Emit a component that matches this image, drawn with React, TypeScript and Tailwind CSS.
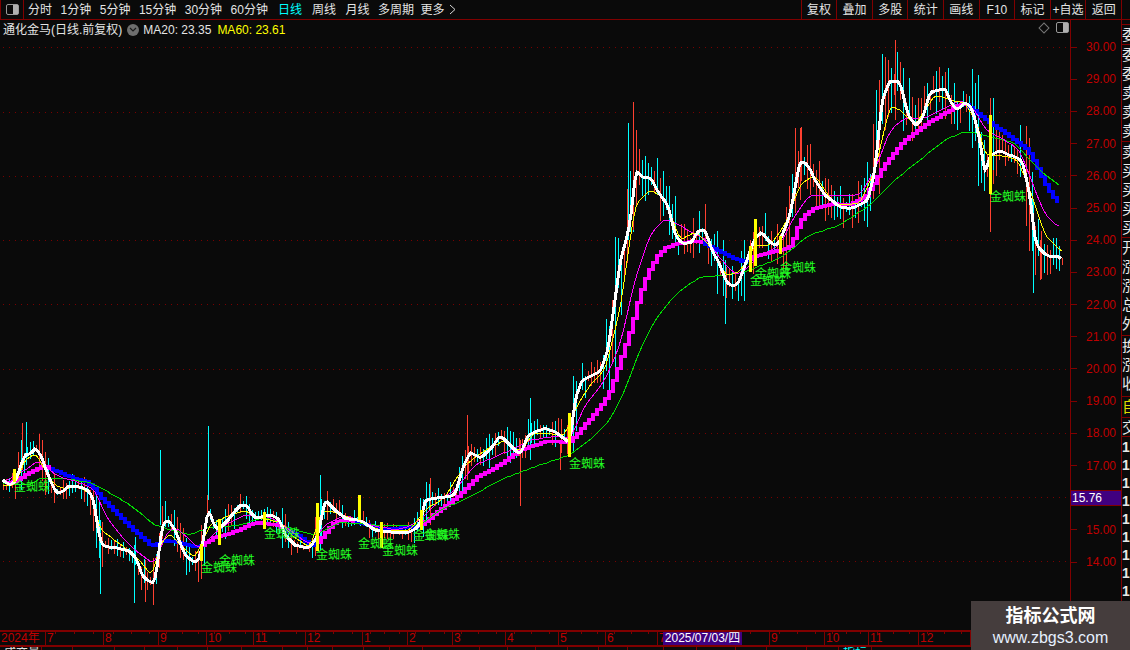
const font = { fontFamily: '"Liberation Sans", "Noto Sans CJK SC", sans-serif' };

type Pt = [number, number];

const whitePts: Pt[] = [[3,480],[8,484],[14,484],[20,468],[26,452],[30,455],[36,447],[42,458],[48,475],[55,491],[62,493],[68,486],[78,486],[88,490],[94,500],[98,530],[102,546],[115,547],[130,551],[137,560],[142,576],[150,582],[155,582],[158,560],[162,525],[168,519],[175,530],[185,555],[195,563],[200,558],[205,530],[208,507],[214,525],[218,530],[228,520],[240,505],[247,505],[252,515],[258,518],[270,514],[280,520],[285,535],[295,545],[310,548],[318,535],[325,500],[335,510],[345,518],[360,520],[375,530],[395,532],[410,532],[420,525],[425,500],[435,498],[455,495],[462,470],[470,452],[480,458],[490,450],[500,435],[510,445],[520,455],[528,435],[545,428],[555,432],[570,443],[575,400],[582,380],[600,372],[608,350],[615,300],[620,262],[630,225],[636,168],[642,178],[650,177],[660,195],[668,205],[675,235],[682,243],[692,242],[698,230],[705,230],[712,250],[720,265],[728,285],[738,285],[745,265],[755,238],[762,232],[770,243],[778,245],[790,215],[800,160],[808,165],[815,180],[825,195],[840,207],[852,208],[868,200],[875,170],[882,100],[890,80],[900,82],[908,115],[915,125],[922,120],[930,92],[938,90],[945,88],[952,105],[958,110],[965,102],[972,108],[980,140],[985,175],[990,155],[1000,150],[1012,156],[1022,160],[1030,195],[1035,240],[1040,250],[1050,257],[1058,255],[1062,262]];
const yellowPts: Pt[] = [[3,485],[15,485],[25,460],[36,453],[50,480],[60,488],[80,487],[92,495],[100,530],[108,535],[125,548],[140,560],[152,577],[160,545],[170,533],[180,545],[195,558],[210,525],[225,517],[245,510],[255,517],[280,522],[295,538],[310,548],[322,510],[335,512],[355,520],[380,530],[410,530],[425,510],[445,497],[465,465],[485,450],[505,440],[520,452],[535,432],[565,435],[575,410],[590,385],[605,370],[620,310],[635,205],[650,190],[665,198],[680,240],[695,232],[710,245],[725,275],[740,272],[755,245],[770,245],[785,225],[800,185],[815,175],[835,205],[860,203],[875,170],[890,105],[900,110],[915,125],[935,95],[950,100],[965,103],[978,125],[985,155],[1000,155],[1018,160],[1030,190],[1045,235],[1062,252]];
const magentaPts: Pt[] = [[3,482],[25,470],[40,460],[55,475],[80,483],[95,490],[105,515],[120,535],[135,550],[150,562],[155,563],[165,535],[175,527],[190,540],[200,550],[212,535],[225,525],[245,515],[270,517],[290,530],[310,545],[325,525],[345,515],[370,525],[400,530],[420,520],[440,500],[455,490],[475,465],[500,455],[530,440],[560,435],[570,440],[585,405],[605,380],[620,345],[635,280],[650,235],[665,218],[680,225],[695,235],[705,238],[720,258],[735,275],[745,270],[760,255],[780,245],[795,215],[810,195],[835,195],[860,195],[875,170],[890,130],[905,118],[925,118],[945,108],[960,100],[975,110],[985,130],[1000,137],[1020,150],[1035,190],[1045,215],[1060,228]];
const thickPts: Pt[] = [[3,482],[15,482],[30,472],[45,465],[60,472],[75,478],[90,482],[105,500],[120,515],[135,530],[155,547],[160,540],[175,541],[200,547],[215,537],[240,530],[255,522],[280,525],[300,535],[316,548],[320,540],[335,522],[350,519],[380,528],[420,527],[440,510],[460,495],[480,475],[500,465],[520,450],[550,440],[570,443],[590,420],[610,395],[625,350],[633,327],[640,297],[650,270],[660,253],[667,247],[675,244],[700,240],[725,253],[745,262],[757,255],[793,247],[800,222],[813,208],[836,203],[850,205],[868,195],[885,165],[905,140],[925,125],[950,110],[965,102],[985,118],[1010,135],[1030,150],[1050,190],[1062,207]];
const greenPts: Pt[] = [[3,483],[30,485],[40,478],[60,478],[90,482],[105,490],[130,505],[155,525],[165,528],[190,535],[210,527],[240,525],[265,517],[290,528],[315,535],[340,522],[380,525],[420,525],[440,510],[470,497],[500,480],[540,465],[570,455],[590,440],[610,420],[625,390],[640,350],[655,320],[675,295],[700,277],[720,275],[745,272],[780,258],[810,235],[840,225],[870,205],[895,180],[920,160],[945,140],[965,131],[985,135],[1015,143],[1030,160],[1045,175],[1060,186]];

// stretches where the thick average is falling and drawn blue
const blueRanges: Pt[] = [[48,157],[163,200],[283,316],[352,420],[703,748],[966,1062]];

// price wicks that stick out further than the random ones
const spikes: [number, number, number, string][] = [
  [22,423,470,"#ff4030"],[26,422,465,"#00ffff"],[208,426,500,"#00ffff"],[160,450,525,"#00ffff"],[145,560,602,"#ff4030"],[134,545,603,"#00ffff"],
  [100,520,594,"#00ffff"],[520,440,506,"#ff4030"],[633,102,230,"#ff4030"],[628,123,240,"#00ffff"],[725,260,324,"#00ffff"],[895,40,120,"#ff4030"],
  [885,57,130,"#ff4030"],[990,98,232,"#ff4030"],[993,98,170,"#00ffff"],[1033,200,293,"#00ffff"],[1040,240,280,"#ff4030"],[800,128,200,"#ff4030"],
  [795,128,200,"#ff4030"],[530,398,460,"#00ffff"],[467,415,480,"#ff4030"],[560,440,470,"#ff4030"],[430,478,525,"#ff4030"],[320,475,550,"#00ffff"],
];

const barsY: [number, number, number][] = [[14,469,482],[201,544,561],[219,519,545],[264,512,529],[317,503,551],[359,495,520],[381,522,548],[421,510,530],[569,413,457],[750,246,272],[755,219,266],[780,236,254],[990,115,194]];
const spiders: Pt[] = [[14,491],[201,572],[219,565],[264,538],[316,559],[358,548],[382,555],[413,540],[424,539],[569,468],[750,285],[755,278],[780,272],[990,201]];

const priceRows = ["30.00","29.00","28.00","27.00","26.00","25.00","24.00","23.00","22.00","21.00","20.00","19.00","18.00","17.00","","15.00","14.00"];
const gridY = [47,112,176,240,304,369,433,497,561];

const periods: [string, string][] = [["分时",""],["1分钟",""],["5分钟",""],["15分钟",""],["30分钟",""],["60分钟",""],["日线","ml-[1.5px] text-[#00ffff]"],["周线","ml-[1.5px]"],["月线","ml-[1px]"],["多周期",""],["更多","-ml-[2px]"]];
const tools = ["复权","叠加","多股","统计","画线","F10","标记","+自选","返回"];

const months: [string, number][] = [["2024年",46],["7",58],["8",55],["9",48],["10",47],["11",52],["12",57],["1",45],["2",45],["3",53],["4",53],["5",47],["6",52],["7",112],["9",55],["10",44],["11",50],["12",52]];
const lowerCells = [42,31,42,30,33,30,34,41,25,25,31,26,33,57,28,28,32,31,29,36,33,39,31,40,32,33,258];

const strip: [number, string, string][] = [
  [5,"text-[#e8e8e8]",""],[20,"text-[#e8e8e8]","委"],[97,"text-[#e8e8e8]","委委卖卖卖"],[96,"text-[#e8e8e8]","卖买买买买"],
  [98,"text-[#e8e8e8]","开涨涨总外"],[61,"text-[#e8e8e8]","换涨收"],[21,"text-[#dddd00]","自"],[19,"text-[#e8e8e8]","交"],
];

function resample(pts: Pt[], step: number): Pt[] {
  const raw: Pt[] = [];
  let j = 0;
  for (let x = pts[0][0]; x <= pts[pts.length - 1][0]; x += step) {
    while (j < pts.length - 2 && pts[j + 1][0] < x) j++;
    const [x0, y0] = pts[j];
    const [x1, y1] = pts[j + 1];
    raw.push([x, y0 + ((y1 - y0) * (x - x0)) / (x1 - x0)]);
  }
  return raw.map((p, i) => {
    const a = raw[Math.max(0, i - 1)][1];
    const b = raw[Math.min(raw.length - 1, i + 1)][1];
    return [p[0], Math.round((a + 2 * p[1] + b) / 4)] as Pt;
  });
}

function toPoints(pts: Pt[]) {
  return pts.map((p) => p.join(",")).join(" ");
}

function makeWicks() {
  let seed = 4217;
  const rnd = () => {
    seed = (seed * 16807) % 2147483647;
    return seed / 2147483647;
  };
  const line = resample(whitePts, 3);
  return line.map(([x, y], i) => {
    const prev = line[Math.max(0, i - 2)][1];
    const next = line[Math.min(line.length - 1, i + 2)][1];
    const steep = Math.abs(next - prev);
    const span = 5 + steep * 0.7 + (560 - y) * 0.035;
    return {
      x,
      top: Math.round(y - rnd() * span - 2),
      bottom: Math.round(y + rnd() * span + 2),
      color: rnd() > 0.5 ? "#00ffff" : "#ff4030",
    };
  });
}

function Chart() {
  const wicks = makeWicks();
  const thick = resample(thickPts, 4);
  return (
    <svg className="absolute inset-0" width="1070" height="610" viewBox="0 20 1070 610" shapeRendering="crispEdges">
      {gridY.map((y) => (
        <line key={y} x1="3" x2="1070" y1={y + 0.5} y2={y + 0.5} stroke="#7a0000" strokeDasharray="1 5" />
      ))}
      {wicks.map((w) => (
        <rect key={w.x} x={w.x} y={w.top} width="1" height={w.bottom - w.top} fill={w.color} />
      ))}
      {spikes.map(([x, a, b, c], i) => (
        <rect key={i} x={x} y={a} width="1" height={b - a} fill={c} />
      ))}
      {thick.slice(0, -1).map(([x, y], i) => {
        const ny = thick[i + 1][1];
        const h = Math.abs(ny - y);
        const blue = blueRanges.some(([a, b]) => x >= a && x <= b);
        return (
          <rect key={x} x={x} y={Math.min(y, ny) - 1} width="4" height={h + 3} fill={blue ? "#0000ff" : "#ff00ff"} />
        );
      })}
      <polyline points={toPoints(resample(greenPts, 4))} fill="none" stroke="#00e000" strokeWidth="1" />
      <polyline points={toPoints(resample(magentaPts, 4))} fill="none" stroke="#ff00ff" strokeWidth="1" />
      <polyline points={toPoints(resample(yellowPts, 3))} fill="none" stroke="#ffff00" strokeWidth="1" />
      <polyline points={toPoints(resample(whitePts, 2))} fill="none" stroke="#ffffff" strokeWidth="3" />
      {barsY.map(([x, a, b]) => (
        <rect key={x} x={x - 1} y={a} width="3" height={b - a} fill="#ffff00" />
      ))}
      {spiders.map(([x, y]) => (
        <text key={x} x={x} y={y} fontSize="12" fill="#22ff22" style={font}>
          金蜘蛛
        </text>
      ))}
    </svg>
  );
}

function PanelIcon() {
  return (
    <span className="flex h-[11px] w-[13px] justify-end rounded-[2px] border border-[#9a9a9a]">
      <span className="w-[5px] bg-[#b0b0b0]" />
    </span>
  );
}

export default function App() {
  return (
    <div className="relative flex h-[650px] w-[1130px] flex-col overflow-hidden bg-[#0a0a0a]" style={font}>
      {/* top toolbar */}
      <div className="flex h-5 shrink-0 items-stretch border-b border-[#800000] text-xs text-[#e4e4e4]">
        <div className="flex w-6 items-center justify-center border-x border-[#800000]">
          <PanelIcon />
        </div>
        <div className="flex items-center gap-[8.5px] pl-1">
          {periods.map(([p, cls]) => (
            <span key={p} className={cls}>
              {p}
            </span>
          ))}
          <svg width="7" height="11" viewBox="0 0 7 11" className="-ml-1">
            <path d="M1 1l5 4.5-5 4.5" fill="none" stroke="#d8d8d8" />
          </svg>
        </div>
        <div className="ml-auto flex">
          {tools.map((t) => (
            <div key={t} className="flex w-[35.6px] items-center justify-center whitespace-nowrap border-l border-[#800000]">
              {t}
            </div>
          ))}
          <div className="w-[9px] border-l border-[#800000]" />
        </div>
      </div>

      {/* chart, price axis, side strip */}
      <div className="flex min-h-0 flex-1">
        <div className="relative w-[1070px] shrink-0">
          <Chart />
          <div className="absolute left-[3px] top-0 flex h-[19px] items-center text-xs text-[#e4e4e4]">
            <span>通化金马(日线.前复权)</span>
            <span className="ml-[5px] flex h-[12px] w-[12px] items-center justify-center rounded-full bg-[#6e6e6e]">
              <svg width="8" height="6" viewBox="0 0 8 6">
                <path d="M1 1l3 3 3-3" fill="none" stroke="#1a1a1a" strokeWidth="1.2" />
              </svg>
            </span>
            <span className="ml-[4px]">MA20: 23.35</span>
            <span className="ml-[6px] text-[#ffff00]">MA60: 23.61</span>
          </div>
          <div className="absolute right-[1px] top-[2px] flex items-center gap-[8px]">
            <span className="h-[8px] w-[8px] rotate-45 border border-[#777]" />
            <PanelIcon />
          </div>
        </div>

        <div className="w-[51px] shrink-0 border-l border-[#800000] pt-[11px] text-xs text-[#c00000]">
          {priceRows.map((p, i) =>
            p ? (
              <div key={p} className="flex h-[32.2px] items-center">
                <span className="h-px w-[6px] bg-[#800000]" />
                <span className="ml-[9px]">{p}</span>
              </div>
            ) : (
              <div key={i} className="flex h-[32.2px] items-center">
                <span className="flex h-[16px] w-full items-center border-y border-[#800000] bg-[#400080] pl-px text-white">
                  15.76
                </span>
              </div>
            ),
          )}
        </div>

        <div className="flex w-[9px] shrink-0 flex-col overflow-hidden border-l border-[#800000] text-[15px] leading-[19px]">
          {strip.map(([h, color, chars], i) => (
            <div key={i} className={`shrink-0 overflow-hidden border-b border-[#800000] ${color}`} style={{ height: h }}>
              {chars.split("").map((c, k) => (
                <div key={k} className="w-[20px]">
                  {c}
                </div>
              ))}
            </div>
          ))}
          <div className="flex flex-col pt-[1px] text-[14px] font-bold leading-[18px] text-[#e8e8e8]">
            {Array.from({ length: 10 }, (_, i) => (
              <span key={i}>1</span>
            ))}
          </div>
        </div>
      </div>

      {/* time axis */}
      <div className="relative flex h-[17px] shrink-0 border-y-2 border-[#800000] text-xs leading-[13px] text-[#c00000]">
        {months.map(([m, w], i) => (
          <div key={i} className="relative shrink-0 border-r border-[#800000] pl-px" style={{ width: w }}>
            {m}
            {i > 0 && (
              <div className="absolute inset-x-0 top-0 flex justify-around">
                <span className="h-[2px] w-px bg-[#800000]" />
                <span className="h-[2px] w-px bg-[#800000]" />
                <span className="h-[2px] w-px bg-[#800000]" />
              </div>
            )}
          </div>
        ))}
        <div className="absolute left-[663px] top-0 flex h-[13px] w-[79px] items-center justify-center whitespace-nowrap bg-[#400080] text-white">
          2025/07/03/四
        </div>
      </div>

      {/* clipped row under the axis */}
      <div className="flex h-[3px] shrink-0 overflow-hidden text-xs leading-[12px] text-[#e4e4e4]">
        {lowerCells.map((w, i) => (
          <div key={i} className="shrink-0 border-r border-[#800000] pl-1 whitespace-nowrap" style={{ width: w }}>
            {i === 0 ? "成交量" : ""}
            {i === 25 ? <span className="text-[#00ffff]">指标</span> : ""}
          </div>
        ))}
      </div>

      {/* watermark */}
      <div className="absolute bottom-0 right-0 flex h-[49px] w-[159px] flex-col items-center justify-center bg-[#453d3d] text-white">
        <span className="text-[18px] font-bold leading-[24px]">指标公式网</span>
        <span className="text-[16px] leading-[20px] text-[#e6f0ff]">www.zbgs3.com</span>
      </div>
    </div>
  );
}
